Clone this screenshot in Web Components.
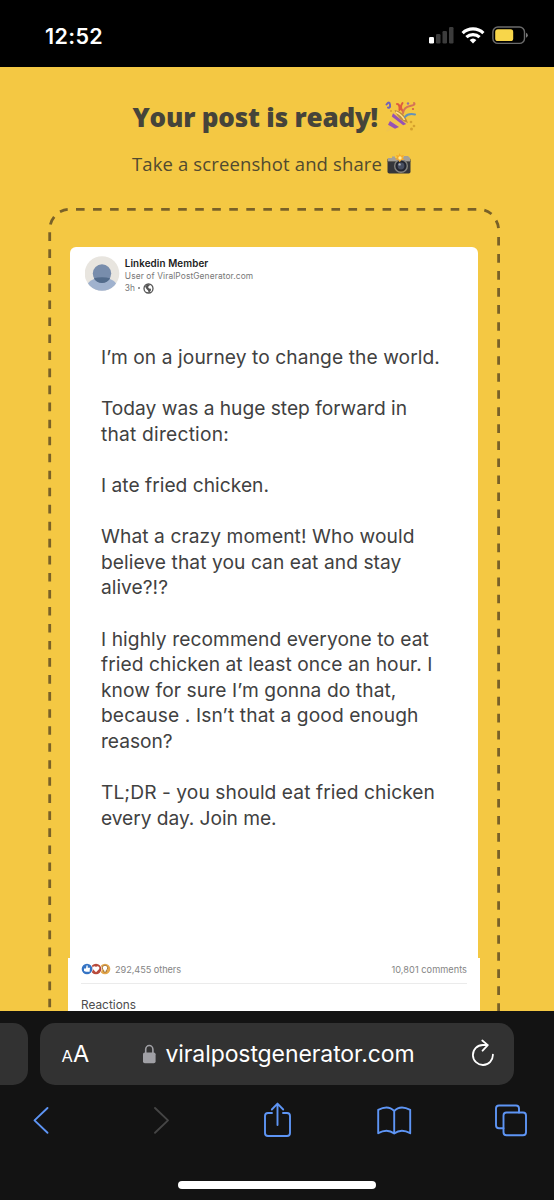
<!DOCTYPE html>
<html lang="en">
<head>
<meta charset="utf-8">
<title>Viral Post Generator</title>
<style>
  body {
    margin: 0;
    background: #131313;
  }
</style>
</head>
<body>
<phone-screen>
  <status-bar slot="status" time="12:52"></status-bar>
  <share-page>
    <post-card>
      <post-author slot="author" name="Linkedin Member" about="User of ViralPostGenerator.com" age="3h"></post-author>
      <fit-text width="339">I’m on a journey to change the world.</fit-text>
      <fit-text class="gap" width="306">Today was a huge step forward in</fit-text>
      <fit-text width="128">that direction:</fit-text>
      <fit-text class="gap" width="168">I ate fried chicken.</fit-text>
      <fit-text class="gap" width="313.5">What a crazy moment! Who would</fit-text>
      <fit-text width="300.5">believe that you can eat and stay</fit-text>
      <fit-text width="67">alive?!?</fit-text>
      <fit-text class="gap" width="328">I highly recommend everyone to eat</fit-text>
      <fit-text width="331.5">fried chicken at least once an hour. I</fit-text>
      <fit-text width="295.5">know for sure I’m gonna do that,</fit-text>
      <fit-text width="317.5">because . Isn’t that a good enough</fit-text>
      <fit-text width="71.5">reason?</fit-text>
      <fit-text class="gap" width="334">TL;DR - you should eat fried chicken</fit-text>
      <fit-text width="175.5">every day. Join me.</fit-text>
      <post-stats slot="stats" others="292,455 others" comments="10,801 comments"></post-stats>
    </post-card>
  </share-page>
  <browser-bar slot="browser" host="viralpostgenerator.com"></browser-bar>
</phone-screen>

<script>
const define = (name, html, setup) => {
  const template = document.createElement('template');
  template.innerHTML = html;

  customElements.define(name, class extends HTMLElement {
    constructor() {
      super();
      this.attachShadow({ mode: 'open' }).appendChild(template.content.cloneNode(true));
    }

    connectedCallback() {
      // [data-attr] nodes show the host attribute of that name
      this.shadowRoot.querySelectorAll('[data-attr]').forEach(el => {
        el.textContent = this.getAttribute(el.dataset.attr);
      });
      if (setup) setup(this);
    }
  });
};

define('phone-screen', `
<style>
  :host {
    display: grid;
    grid-template-rows: 67px 944px 189px;
    width: 554px;
    height: 1200px;
    overflow: hidden;
    font-family: Inter, "Liberation Sans", sans-serif;
  }
</style>
<slot name="status"></slot>
<slot></slot>
<slot name="browser"></slot>
`);

define('status-bar', `
<style>
  :host {
    display: flex;
    justify-content: space-between;
    align-items: flex-start;
    box-sizing: border-box;
    padding: 21.500px 26px 0 45px;
    background: #000;
    color: #fff;
  }
  .time {
    font-size: 21.500px;
    font-weight: 600;
    line-height: 28px;
  }
  svg { display: block; margin-top: 3.500px; }
</style>
<fit-text class="time" width="58"><span data-attr="time"></span></fit-text>
<svg width="100" height="22" viewBox="428 25 100 22">
  <rect x="429" y="37" width="5" height="6.5" rx="1.2" fill="#fff"/>
  <g fill="#3c3c3c">
    <rect x="436" y="34" width="4.5" height="9.5" rx="1.2"/>
    <rect x="442.5" y="31" width="4.5" height="12.5" rx="1.2"/>
    <rect x="449" y="27" width="4.5" height="16.5" rx="1.2"/>
  </g>
  <g fill="none" stroke="#fff" stroke-width="3.2">
    <path d="M462.6 33.1a15 15 0 0 1 20.8 0"/>
    <path d="M466.4 37.2a9.6 9.6 0 0 1 13.2 0"/>
  </g>
  <path d="M473 43.6l-3.4-3.6a5 5 0 0 1 6.8 0z" fill="#fff"/>
  <rect x="492.9" y="27" width="31.6" height="16.4" rx="5" fill="none" stroke="#6b6b6b" stroke-width="1.4"/>
  <rect x="495.2" y="29.3" width="18" height="11.8" rx="2.6" fill="#f8d64a"/>
  <path d="M526 32.7q1.8 .8 1.8 2.5t-1.8 2.5z" fill="#7a7a7a"/>
</svg>
`);

define('share-page', `
<style>
  :host {
    display: flex;
    flex-direction: column;
    min-height: 0;
    overflow: hidden;
    background: #f4c843;
    color: #46443a;
    font-family: "Open Sans", "Noto Sans", sans-serif;
  }
  header {
    display: flex;
    flex-direction: column;
    flex: none;
    height: 141px;
    padding-left: 132px;
  }
  .row { display: flex; align-items: center; }
  .title {
    height: 36px;
    margin-top: 32px;
    font-size: 26px;
    font-weight: 800;
  }
  .title fit-text { margin-left: .5px; }
  .title svg { margin: 0 0 0 5.500px; }
  .sub {
    height: 28px;
    margin-top: 14px;
    font-size: 18.5px;
    color: #514a2f;
  }
  .sub svg { margin: 2px 0 0 5px; }
  .frame {
    display: grid;
    grid-template-columns: 554px;
  }
  .frame > * { grid-area: 1 / 1; }
  .dashes { display: block; }
  .content { padding: 39px 0 0 68px; }
</style>
<header>
  <div class="row title">
    <fit-text width="245.500">Your post is ready!</fit-text>
    <svg width="32" height="32" viewBox="0 0 32 32">
      <path d="M2 31L10.5 9Q20 13 24 22z" fill="#f0c44c"/>
      <path d="M6 20l9 6-4 1.800-7-4zM9 12.200l13.200 10.700-3 1.300L7.800 15.500z" fill="#9651b5"/>
      <path d="M10.500 9Q20 10 24 22Q15 20 10.500 9z" fill="#c08a3d"/>
      <path d="M12 11Q18 14 20.500 19" fill="none" stroke="#ffe186" stroke-width="1.600"/>
      <g fill="none" stroke-width="2" stroke-linecap="round">
        <path d="M2.500 3.500q3-4 3.500 0t-2 3" stroke="#7364b5"/>
        <path d="M13 3q3 0 2.500 6m3-7q-3 4 0 8" stroke="#de5b3f"/>
        <path d="M19 12q1-6 7-7t4-3" stroke="#d57357"/>
        <path d="M21 16q3-4 10-2.500" stroke="#6593b8"/>
      </g>
      <g fill="#d5a12d">
        <circle cx="27" cy="21" r="1.300"/><circle cx="30" cy="25" r="1.300"/>
        <circle cx="27.500" cy="28" r="1.500"/><circle cx="7" cy="10" r="1"/>
      </g>
      <circle cx="24" cy="2.500" r="1.200" fill="#9370a5"/>
      <circle cx="29" cy="8" r="1.100" fill="#d15e48"/>
    </svg>
  </div>
  <div class="row sub">
    <fit-text width="250">Take a screenshot and share</fit-text>
    <svg width="24" height="22" viewBox="0 0 24 22">
      <rect x="0.500" y="5" width="23" height="15.500" rx="1.800" fill="#35363a"/>
      <path d="M1 5h4V3.500h3V5h8l1-2h4l2 2v3H1z" fill="#a3a09a"/>
      <rect x="0.500" y="8" width="23" height="1" fill="#5f5d57"/>
      <circle cx="14" cy="13" r="7" fill="#85847f"/>
      <circle cx="14" cy="13" r="5.600" fill="#242630"/>
      <circle cx="14" cy="13" r="3.400" fill="#474e60"/>
      <circle cx="12.600" cy="11.400" r="1.200" fill="#a9b1bd"/>
      <path d="M12.500 0l1.300 2.800L17 2l-1.600 2.700 2.300 2-3.300.3-1.700 2.300-1.400-2.500-3.300-.2 2.200-2.200L9 2l2.700.7z" fill="#f7a928"/>
      <circle cx="13" cy="5" r="1.700" fill="#ffed9c"/>
    </svg>
  </div>
</header>
<div class="frame">
  <svg class="dashes" width="554" height="803" viewBox="0 208 554 803" fill="none" stroke="#796128" stroke-width="2.800">
    <path d="M76 209.300H478" stroke-dasharray="8.600 8.430"/>
    <path d="M49.700 232.300V1011M498.600 237V1011" stroke-dasharray="8.600 8.430"/>
    <path d="M60 211.700q4-1.900 7.700-2.300M50.400 224.500q1.200-4.500 3.800-7.600M484.300 210.200q4.200 1.300 7.200 3.800M496.100 220.500q2 3.500 2.400 7.700"/>
  </svg>
  <div class="content"><slot></slot></div>
</div>
`);

define('post-card', `
<style>
  :host {
    display: block;
    width: 412px;
    color: #414141;
    font-family: Inter, "Liberation Sans", sans-serif;
  }
  .top {
    display: flex;
    flex-direction: column;
    box-sizing: border-box;
    width: 408.500px;
    height: 711px;
    margin-left: 1.800px;
    padding: 8px 0 0 15px;
    border-radius: 6px 6px 0 0;
    background: #fff;
  }
  .body {
    margin: 51px 0 0 16.200px;
    font-size: 19.200px;
    line-height: 25.600px;
  }
  ::slotted(.gap) { margin-top: 25.600px; }
</style>
<div class="top">
  <slot name="author"></slot>
  <div class="body"><slot></slot></div>
</div>
<slot name="stats"></slot>
`);

define('post-author', `
<style>
  :host { display: flex; gap: 5px; height: 39px; }
  .lines { padding-top: 2px; color: #777; font-size: 8.400px; line-height: 12px; }
  .name { color: #1b1b1b; font-size: 9.800px; font-weight: 600; line-height: 13px; }
  .age { display: flex; align-items: center; gap: 3px; height: 12px; }
  .dot { width: 2px; height: 2px; border-radius: 50%; background: #777; }
</style>
<svg width="35" height="36" viewBox="0 0 35 36">
  <clipPath id="round"><circle cx="17" cy="18.500" r="17.300"/></clipPath>
  <g clip-path="url(#round)">
    <rect width="35" height="36" fill="#e8e5df"/>
    <ellipse cx="17" cy="33" rx="15.500" ry="10.500" fill="#a0b2ce"/>
    <circle cx="17" cy="18.500" r="9.200" fill="#788dac"/>
    <path d="M8.800 23.300q8.200-2.200 16.400 0q-2.500 4.700-8.200 4.700t-8.200-4.700z" fill="#526b8b"/>
  </g>
</svg>
<div class="lines">
  <fit-text class="name" width="83.500"><span data-attr="name"></span></fit-text>
  <fit-text width="128.500"><span data-attr="about"></span></fit-text>
  <div class="age">
    <span data-attr="age"></span><span class="dot"></span>
    <svg width="11" height="11" viewBox="0 0 11 11">
      <circle cx="5.500" cy="5.500" r="4.500" fill="#fff" stroke="#555" stroke-width="1.300"/>
      <path d="M2 3.500L4.500 1.200 7 2 5 4l1 1.500 2 .3-.2 2L5.800 10 5 7.500 3.500 6z" fill="#555"/>
    </svg>
  </div>
</div>
`);

define('post-stats', `
<style>
  :host {
    display: block;
    box-sizing: border-box;
    height: 53px;
    padding: 0 13px;
    background: #fff;
    color: #858585;
    font-size: 9.200px;
  }
  .counts {
    display: flex;
    align-items: center;
    box-sizing: border-box;
    height: 25.500px;
    padding-bottom: 2px;
    border-bottom: 1px solid #ebebeb;
  }
  svg { margin-right: 4px; }
  .comments { margin-left: auto; }
  .reactions { margin-top: 15.500px; color: #4c4c4c; font-size: 11.800px; line-height: 12px; }
</style>
<div class="counts">
  <svg width="30" height="12" viewBox="0 0 30 12">
    <circle cx="24" cy="6" r="5.300" fill="#e4a74c"/>
    <path d="M24 2.300a2.600 2.600 0 0 1 1.300 4.900V9h-2.600V7.200A2.600 2.600 0 0 1 24 2.300z" fill="#fff" stroke="#956523" stroke-width=".8"/>
    <circle cx="15" cy="6" r="5.900" fill="#fff"/>
    <circle cx="15" cy="6" r="5.300" fill="#b84a3b"/>
    <path d="M15 9.300L11.800 6a1.900 1.900 0 0 1 3.200-2 1.900 1.900 0 0 1 3.200 2z" fill="#fff"/>
    <circle cx="6" cy="6" r="5.900" fill="#fff"/>
    <circle cx="6" cy="6" r="5.300" fill="#3574c4"/>
    <path d="M3 5.500h2L5.500 2.500h1.200v2.200H9L8.600 8.800H5L3 8z" fill="#fff"/>
  </svg>
  <fit-text width="66"><span data-attr="others"></span></fit-text>
  <fit-text class="comments" width="75.500"><span data-attr="comments"></span></fit-text>
</div>
<fit-text class="reactions" width="55">Reactions</fit-text>
`);

define('browser-bar', `
<style>
  :host { display: flex; flex-direction: column; background: #131313; color: #fff; }
  svg { display: block; flex: none; }
  .tabs { display: flex; gap: 12px; margin-top: 11.500px; height: 62px; }
  .previous { width: 28px; border-radius: 0 15px 15px 0; background: #323232; }
  .address {
    display: flex;
    align-items: center;
    box-sizing: border-box;
    width: 474px;
    padding: 0 19px 0 21.500px;
    border-radius: 15px;
    background: #323232;
  }
  .size { display: flex; align-items: baseline; width: 80.500px; margin-top: 2px; line-height: 28px; }
  .small { font-size: 16.500px; }
  .large { font-size: 23.500px; }
  .host { margin-left: 8.500px; font-size: 23px; line-height: 28px; }
  .reload { margin: -4px 0 0 auto; }
  .tools { margin-top: 16px; }
  .home { width: 198px; height: 8px; margin: 39px 0 0 178px; border-radius: 4px; background: #fff; }
</style>
<div class="tabs">
  <div class="previous"></div>
  <div class="address">
    <div class="size"><span class="small">A</span><span class="large">A</span></div>
    <svg width="15" height="22" viewBox="142 1042.500 15 22">
      <rect x="143" y="1052" width="12.600" height="10.800" rx="1.800" fill="#a0a0a5"/>
      <path d="M145.700 1053v-4a3.600 4 0 0 1 7.200 0v4" fill="none" stroke="#a0a0a5" stroke-width="1.600"/>
    </svg>
    <fit-text class="host" width="249"><span data-attr="host"></span></fit-text>
    <svg class="reload" width="24" height="28" viewBox="471 1038 24 28" fill="none" stroke="#fff" stroke-width="1.800" stroke-linecap="round" stroke-linejoin="round">
      <path d="M492.900 1054.600a10 10 0 1 1-10-9.600h4.800M482.300 1040.500l5.500 4.600-5.200 5.600"/>
    </svg>
  </div>
</div>
<svg class="tools" width="554" height="41" viewBox="0 1101 554 41" fill="none" stroke="#5e95f5" stroke-width="1.900" stroke-linecap="round" stroke-linejoin="round">
  <path d="M47.500 1108l-13 12.400 13 12.400"/>
  <path d="M155 1108l13 12.400-13 12.400" stroke="#454545"/>
  <path d="M272 1113h-4q-3 0-3 3v17q0 3 3 3h19q3 0 3-3v-17q0-3-3-3h-4M277.500 1125v-20.500M271.800 1109.500l5.700-5.900 5.700 5.900"/>
  <path d="M394.200 1111q-6-6.500-16-1.200v23.400q9-5 16 .300 7-5.300 16-.3v-23.400q-10-5.300-16 1.200zv22.500"/>
  <path d="M503.500 1128.300h-4.500q-3 0-3-3v-16.800q0-3 3-3h17q3 0 3 3v4"/>
  <rect x="503.500" y="1112.500" width="22.500" height="22.800" rx="3"/>
</svg>
<div class="home"></div>
`);

// One line of text, tracked so that its advance equals the width attribute
define('fit-text', `
<style>
  :host { display: block; white-space: nowrap; }
  .line { display: inline-block; }
</style>
<span class="line"><slot></slot></span>
`, el => {
  requestAnimationFrame(() => {
    const line = el.shadowRoot.querySelector('.line');
    const width = parseFloat(el.getAttribute('width'));
    const spare = width - line.getBoundingClientRect().width;
    line.style.letterSpacing = spare / el.textContent.length + 'px';
  });
});
</script>
</body>
</html>
